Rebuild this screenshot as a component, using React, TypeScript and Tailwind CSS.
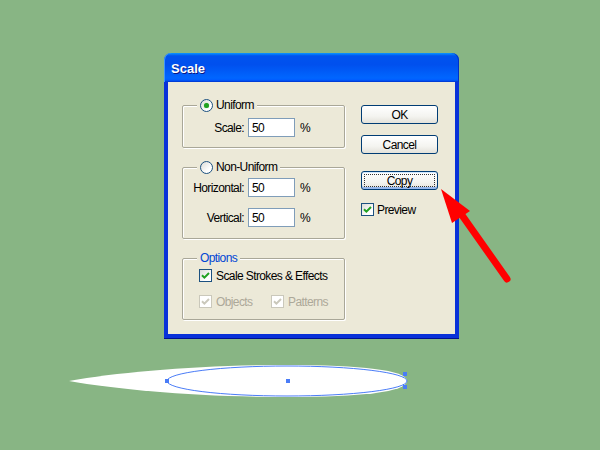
import React from 'react';

const font = { fontFamily: '"Liberation Sans", Arial, sans-serif' };

function Radio({ checked }: { checked?: boolean }) {
  return (
    <span className="flex h-[13px] w-[13px] shrink-0 items-center justify-center rounded-full border border-[#1C5180] bg-[linear-gradient(135deg,#DCDCD7_0%,#FFFFFF_70%)]">
      {checked && <span className="h-[5px] w-[5px] rounded-full bg-[#21A121] shadow-[0_0_1px_#5BC85B]" />}
    </span>
  );
}

function Check({ disabled }: { disabled?: boolean }) {
  const stroke = disabled ? '#CAC8BB' : '#21A121';
  return (
    <span
      className={
        'flex h-[13px] w-[13px] shrink-0 items-center justify-center border ' +
        (disabled ? 'border-[#CAC8BB] bg-white' : 'border-[#1C5180] bg-[linear-gradient(135deg,#DCDCD7_0%,#FFFFFF_70%)]')
      }
    >
      <svg width="9" height="9" viewBox="0 0 9 9">
        <path d="M1 4.2 L3.4 6.6 L8 2" fill="none" stroke={stroke} strokeWidth="2" />
      </svg>
    </span>
  );
}

function Field({ label }: { label: string }) {
  return (
    <div className="flex h-[19px] items-center">
      <span className="w-[65px] pr-[4px] text-right">{label}</span>
      <span className="flex h-[19px] w-[47px] items-center border border-[#7F9DB9] bg-white pl-[3px]">50</span>
      <span className="ml-[5px]">%</span>
    </div>
  );
}

function Group({ legend, className, children }: { legend: React.ReactNode; className: string; children: React.ReactNode }) {
  return (
    <div className={'relative rounded-[2px] border border-[#A9A798] shadow-[inset_1px_1px_0_#fff,1px_1px_0_#fff] ' + className}>
      <div className="absolute -top-[7px] left-[14px] flex items-center gap-[3px] bg-[#ECE9D8] px-[3px] leading-[13px]">
        {legend}
      </div>
      {children}
    </div>
  );
}

function Button({ label, focused, className }: { label: string; focused?: boolean; className: string }) {
  return (
    <div
      className={
        'flex h-[19px] w-[77px] items-center justify-center rounded-[3px] border border-[#003C74] bg-[linear-gradient(180deg,#FFFFFF_0%,#F4F4F0_60%,#E3E2DA_100%)] ' +
        (focused ? 'shadow-[inset_0_-2px_0_#97B8EC,inset_0_1px_0_#CEE7FF] ' : '') +
        className
      }
    >
      {focused ? (
        <span className="flex h-[13px] w-[71px] items-center justify-center border border-dotted border-[#333]">{label}</span>
      ) : (
        label
      )}
    </div>
  );
}

export default function App() {
  return (
    <div className="relative h-[450px] w-[600px] overflow-hidden bg-[#88B584] pl-[164px] pt-[53px]" style={font}>
      {/* Dialog window */}
      <div className="flex w-[295px] flex-col">
        <div className="flex h-[29px] items-center rounded-t-[7px] bg-[linear-gradient(180deg,#0997FF_0%,#0053EE_10%,#0050EE_40%,#0066FF_86%,#005BFF_94%,#003DD7_97%,#003DD7_100%)] pl-[7px] pt-[3px] shadow-[inset_1px_0_0_#3D95FF,inset_-1px_0_0_#0030C8]">
          <span className="text-[13px] font-bold text-white [text-shadow:1px_1px_0_#0A1883]">Scale</span>
        </div>
        <div className="flex h-[256px] border-x-[4px] border-b-[4px] border-[#0831D9] bg-[#ECE9D8] text-[12px] tracking-[-0.6px] text-black shadow-[0_1px_0_#001090]">
          {/* Left column */}
          <div className="ml-[14px] mt-[23px] flex w-[163px] flex-col">
            <Group
              className="h-[43px] pt-[12px]"
              legend={
                <>
                  <Radio checked />
                  <span>Uniform</span>
                </>
              }
            >
              <Field label="Scale:" />
            </Group>
            <Group
              className="mt-[19px] h-[72px] pt-[10px]"
              legend={
                <>
                  <Radio />
                  <span>Non-Uniform</span>
                </>
              }
            >
              <Field label="Horizontal:" />
              <div className="mt-[11px]">
                <Field label="Vertical:" />
              </div>
            </Group>
            <Group className="mt-[19px] h-[62px] pl-[16px] pt-[10px]" legend={<span className="text-[#0046D5]">Options</span>}>
              <div className="flex h-[13px] items-center gap-[4px]">
                <Check />
                <span>Scale Strokes &amp; Effects</span>
              </div>
              <div className="mt-[13px] flex h-[13px] items-center text-[#ACA899]">
                <Check disabled />
                <span className="ml-[4px] w-[55px]">Objects</span>
                <Check disabled />
                <span className="ml-[4px]">Patterns</span>
              </div>
            </Group>
          </div>
          {/* Right column */}
          <div className="ml-[16px] mt-[23px] flex flex-col">
            <Button label="OK" className="" />
            <Button label="Cancel" className="mt-[11px]" />
            <Button label="Copy" focused className="mt-[17px]" />
            <div className="mt-[13px] flex h-[13px] items-center gap-[3px]">
              <Check />
              <span>Preview</span>
            </div>
          </div>
        </div>
      </div>

      {/* Artwork and annotation arrow */}
      <svg className="pointer-events-none absolute inset-0" width="600" height="450" viewBox="0 0 600 450">
        <path
          d="M69 381 C120 372 200 365 288 365 C360 365 407 370 407 381 C407 392 360 397 288 397 C200 397 120 390 69 381 Z"
          fill="#FFFFFF"
        />
        <ellipse cx="287" cy="381" rx="120" ry="15" fill="none" stroke="#4A7CF7" strokeWidth="1" />
        <rect x="165" y="379" width="4" height="4" fill="#4A7CF7" />
        <rect x="286" y="379" width="4" height="4" fill="#4A7CF7" />
        <rect x="403" y="372" width="4" height="4" fill="#4A7CF7" />
        <rect x="403" y="385" width="4" height="4" fill="#4A7CF7" />
        <line x1="507" y1="279" x2="459" y2="211" stroke="#FF0000" strokeWidth="7" strokeLinecap="round" />
        <polygon points="441,189 470,211 452,223" fill="#FF0000" />
      </svg>
    </div>
  );
}
